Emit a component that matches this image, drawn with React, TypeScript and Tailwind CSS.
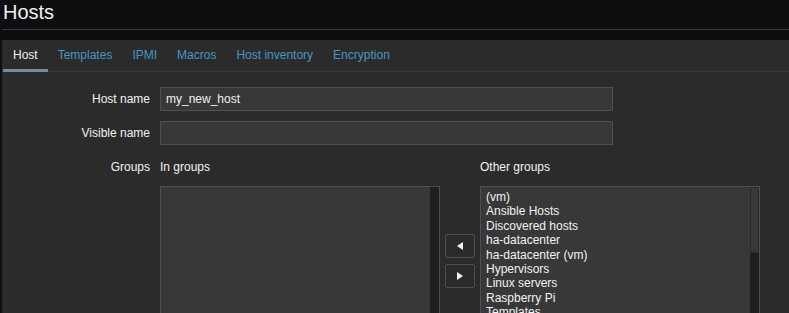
import React from "react";

const tabs = ["Host", "Templates", "IPMI", "Macros", "Host inventory", "Encryption"];

const otherGroups = [
  "(vm)",
  "Ansible Hosts",
  "Discovered hosts",
  "ha-datacenter",
  "ha-datacenter (vm)",
  "Hypervisors",
  "Linux servers",
  "Raspberry Pi",
  "Templates",
  "Virtual machines",
  "Zabbix servers",
];

function Row({ label, children }: { label: string; children: React.ReactNode }) {
  return (
    <div className="flex items-center">
      <div className="w-[158px] pr-[10px] text-right text-[12px] text-[#f2f2f2]">{label}</div>
      {children}
    </div>
  );
}

export default function App() {
  return (
    <div
      className="w-[789px] h-[313px] overflow-hidden bg-[#0e0e10] text-[#f2f2f2]"
      style={{ fontFamily: '"Liberation Sans", Arial, sans-serif' }}
    >
      {/* Header */}
      <div className="ml-[2px] h-[30px] border-b border-[#383838]">
        <h1 className="pl-[1px] text-[20px] leading-[24px] font-normal">Hosts</h1>
      </div>

      {/* Panel */}
      <div className="mt-[10px] ml-[2px] bg-[#2b2b2b] h-[400px]">
        {/* Tabs */}
        <div className="flex h-[32px] border-b border-[#383838] pl-[1px]">
          {tabs.map((t, i) => (
            <div
              key={t}
              className={
                i === 0
                  ? "px-[10px] pt-[1px] text-[12px] leading-[29px] text-[#f2f2f2] border-b-[3px] border-[#768d99] -mb-[1px]"
                  : "px-[10px] pt-[1px] text-[12px] leading-[29px] text-[#4796c4]"
              }
            >
              {t}
            </div>
          ))}
        </div>

        {/* Form */}
        <div className="pt-[15px] flex flex-col gap-[10px]">
          <Row label="Host name">
            <div className="w-[453px] h-[24px] bg-[#383838] border border-[#4f4f4f] px-[5px] text-[12px] leading-[22px]">
              my_new_host
            </div>
          </Row>
          <Row label="Visible name">
            <div className="w-[453px] h-[24px] bg-[#383838] border border-[#4f4f4f]" />
          </Row>

          <div className="flex mt-[4px]">
            <div className="w-[158px] pr-[10px] text-right text-[12px] leading-[16px] text-[#f2f2f2]">Groups</div>
            <div className="flex">
              <div className="w-[280px]">
                <div className="text-[12px] leading-[16px] h-[16px]">In groups</div>
                <div className="mt-[11px] h-[160px] bg-[#383838] border border-[#4f4f4f] flex justify-end">
                  <div className="w-[9px] h-full bg-[#1f1f1f]" />
                </div>
              </div>

              <div className="w-[40px] flex flex-col items-center pt-[75px] gap-[6px]">
                <button className="w-[30px] h-[24px] rounded-[2px] border border-[#4f4f4f] bg-[#2b2b2b] flex items-center justify-center">
                  <svg width="6" height="8" viewBox="0 0 6 8">
                    <path d="M6 0 L0 4 L6 8 Z" fill="#f2f2f2" />
                  </svg>
                </button>
                <button className="w-[30px] h-[24px] rounded-[2px] border border-[#4f4f4f] bg-[#2b2b2b] flex items-center justify-center">
                  <svg width="6" height="8" viewBox="0 0 6 8">
                    <path d="M0 0 L6 4 L0 8 Z" fill="#f2f2f2" />
                  </svg>
                </button>
              </div>

              <div className="w-[280px]">
                <div className="text-[12px] leading-[16px] h-[16px]">Other groups</div>
                <div className="mt-[11px] h-[160px] bg-[#383838] border border-[#4f4f4f] flex overflow-hidden">
                  <div className="flex-1 pl-[5px] pt-[3px] text-[12px] leading-[14.4px]">
                    {otherGroups.map((g) => (
                      <div key={g}>{g}</div>
                    ))}
                  </div>
                  <div className="w-[9px] h-full bg-[#1f1f1f]">
                    <div className="h-[66px] bg-[#383838] border border-[#2a2a2a]" />
                  </div>
                </div>
              </div>
            </div>
          </div>
        </div>
      </div>
    </div>
  );
}
